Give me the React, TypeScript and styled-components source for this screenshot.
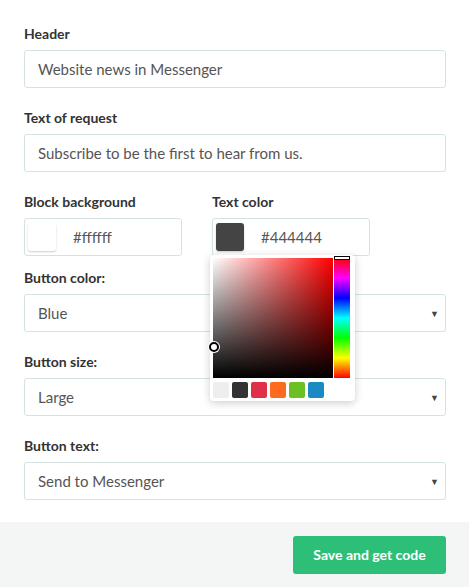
import React from 'react';
import styled, { createGlobalStyle } from 'styled-components';

const Global = createGlobalStyle`
	body { margin: 0; background: #fff; font-family: Lato, "Open Sans", sans-serif; color: #333; }
`;

const Page = styled.div`
	width: 469px;
	height: 587px;
	display: flex;
	flex-direction: column;
`;
const Form = styled.div`
	flex: 1;
	padding: 24px 23px 0 24px;
	display: flex;
	flex-direction: column;
`;
const Label = styled.div`
	font-size: 14px;
	font-weight: 700;
	color: #333;
	height: 20px;
	line-height: 20px;
	margin-bottom: 6px;
`;
const Field = styled.div`
	margin-bottom: 20px;
	&.tight { margin-bottom: 17px; }
	&.close { margin-bottom: 10px; }
`;
const Box = styled.div`
	box-sizing: border-box;
	height: 38px;
	border: 1px solid #d5e3e0;
	border-radius: 3px;
	display: flex;
	align-items: center;
	padding: 0 13px;
	font-size: 15px;
	color: #555;
	position: relative;
`;
const Arrow = styled.span`
	position: absolute;
	right: 6px;
	font-size: 9px;
	color: #444;
`;
const Row = styled.div`
	display: flex;
	gap: 30px;
	position: relative;
`;
const Col = styled.div`
	width: 158px;
`;
const ColorBox = styled(Box)`
	padding: 0 3px;
	gap: 17px;
	width: 158px;
`;
const Swatch = styled.div<{ $c: string }>`
	width: 28px;
	height: 28px;
	border-radius: 3px;
	background: ${p => p.$c};
	box-shadow: 0 1px 2px rgba(0, 0, 0, 0.2);
`;
const Picker = styled.div`
	position: absolute;
	left: 186px;
	top: 63px;
	width: 139px;
	padding: 3px;
	background: #fff;
	border-radius: 4px;
	box-shadow: 0 2px 8px rgba(0, 0, 0, 0.2);
	z-index: 5;
`;
const Plane = styled.div`
	display: flex;
	gap: 1px;
	height: 120px;
`;
const Sat = styled.div`
	width: 120px;
	position: relative;
	background: linear-gradient(to top, #000, transparent), linear-gradient(to right, #fff, #f00);
`;
const Dot = styled.div`
	position: absolute;
	left: -4px;
	top: 84px;
	width: 6px;
	height: 6px;
	border: 2px solid #000;
	border-radius: 50%;
	background: #fff;
	box-shadow: 0 0 0 1px #fff;
`;
const Hue = styled.div`
	width: 16px;
	position: relative;
	background: linear-gradient(to bottom, #f00, #f0f, #00f, #0ff, #0f0, #ff0, #f00);
`;
const HueMark = styled.div`
	position: absolute;
	top: -2px;
	left: 0;
	right: 0;
	height: 2px;
	border: 1px solid #000;
	background: #fff;
`;
const Swatches = styled.div`
	display: flex;
	gap: 3px;
	margin-top: 4px;
`;
const Mini = styled.div<{ $c: string }>`
	width: 16px;
	height: 16px;
	border-radius: 2px;
	background: ${p => p.$c};
`;
const Footer = styled.div`
	height: 65px;
	background: #f4f6f5;
	display: flex;
	align-items: center;
	justify-content: flex-end;
	padding-right: 23px;
`;
const Button = styled.button`
	height: 38px;
	width: 153px;
	border: none;
	border-radius: 3px;
	background: #2dbf78;
	color: #fff;
	font-family: inherit;
	font-weight: 700;
	font-size: 14px;
`;

function Select({ value }: { value: string }) {
	return (
		<Box>
			{value}
			<Arrow>▼</Arrow>
		</Box>
	);
}

export default function App() {
	return (
		<Page>
			<Global />
			<Form>
				<Field>
					<Label>Header</Label>
					<Box>Website news in Messenger</Box>
				</Field>
				<Field>
					<Label>Text of request</Label>
					<Box>Subscribe to be the first to hear from us.</Box>
				</Field>
				<Row>
					<Col>
						<Label>Block background</Label>
						<ColorBox><Swatch $c="#fff" />#ffffff</ColorBox>
					</Col>
					<Col>
						<Label>Text color</Label>
						<ColorBox><Swatch $c="#444" />#444444</ColorBox>
					</Col>
					<Picker>
						<Plane>
							<Sat><Dot /></Sat>
							<Hue><HueMark /></Hue>
						</Plane>
						<Swatches>
							{['#eeeeee', '#333333', '#e03048', '#ff6b1e', '#6bc024', '#1a8ac4'].map(c => (
								<Mini key={c} $c={c} />
							))}
						</Swatches>
					</Picker>
				</Row>
				<Field style={{ marginTop: 12 }}>
					<Label>Button color:</Label>
					<Select value="Blue" />
				</Field>
				<Field>
					<Label>Button size:</Label>
					<Select value="Large" />
				</Field>
				<Field>
					<Label>Button text:</Label>
					<Select value="Send to Messenger" />
				</Field>
			</Form>
			<Footer>
				<Button>Save and get code</Button>
			</Footer>
		</Page>
	);
}
